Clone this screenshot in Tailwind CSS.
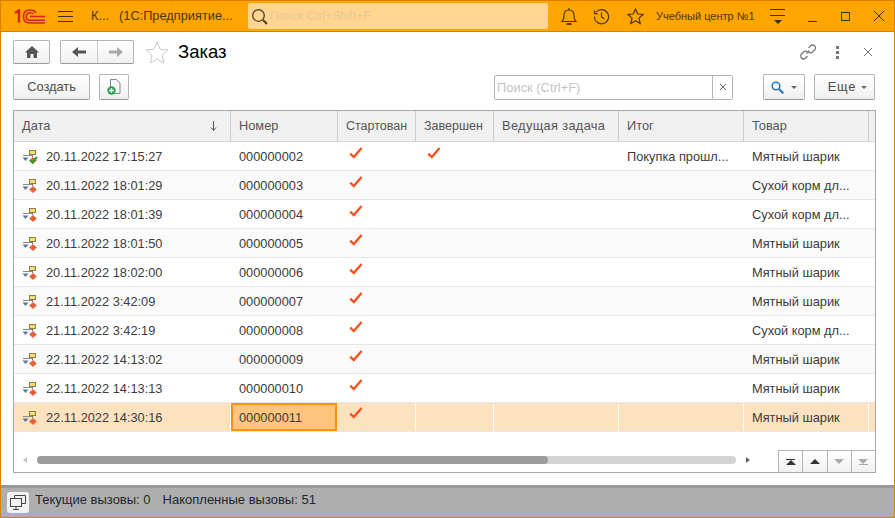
<!DOCTYPE html>
<html lang="en">

<head>
  <meta charset="UTF-8" />
  <script src="https://cdn.jsdelivr.net/npm/@tailwindcss/browser@4"></script>
  <title>Заказ</title>
</head>

<body class="font-['Liberation_Sans',Arial,sans-serif] bg-white">
  <svg class="hidden">
    <symbol id="flow" viewBox="0 0 16 14">
      <rect x="7.500" y="0.500" width="6" height="4" fill="#f3de7a" stroke="#8f8038" stroke-width="1" />
      <path d="M10.500 4.500v2.500" stroke="#777" stroke-width="1" fill="none" />
      <path d="M1 5.500h9" stroke="#8a8a8a" stroke-width="1" fill="none" />
      <path d="M0.500 7.500h6l-3 3.500z" fill="#55779a" />
      <path d="M11 7l3.800 3.500-3.800 3.500-3.800-3.500z" fill="#e2603a" />
    </symbol>
    <symbol id="check" viewBox="0 0 14 14">
      <path d="M1.200 7.600l3.600 3.400L12.600 2" fill="none" stroke="#f4511e" stroke-width="2.300" />
    </symbol>
  </svg>

  <div class="w-[895px] h-[518px] flex flex-col border border-[#d98200] overflow-hidden">
    <!-- top bar -->
    <div class="h-[31px] shrink-0 bg-[#ffa500] border-b border-[#d98200] flex items-center text-[#4a3510]">
      <svg class="ml-[13px] w-[31px] h-[15px]" viewBox="0 0 31 15" fill="none" stroke="#d6231f" stroke-width="1.600">
        <path d="M1 4l4-2.500v12" stroke-width="2.400" />
        <path d="M22 4c-1-2-3-3-6-3-4 0-6.500 2.500-6.500 6.500s2.500 6.500 6.500 6.500h15" />
        <path d="M19.500 5c-.8-.8-2-1.300-3.500-1.300-2.500 0-3.700 1.600-3.700 3.800s1.300 3.800 3.700 3.800h15" />
        <path d="M16 7.500h15" />
      </svg>
      <div class="ml-[13px] w-[15px] flex flex-col gap-[4px]">
        <div class="h-[1px] bg-[#3a3020]"></div>
        <div class="h-[1px] bg-[#3a3020]"></div>
        <div class="h-[1px] bg-[#3a3020]"></div>
      </div>
      <div class="ml-[18px] text-[12.800px] whitespace-nowrap w-[157px] flex">
        <span class="w-[28px]">К...</span>
        <span>(1С:Предприятие...</span>
      </div>
      <div class="w-[300px] h-[26px] bg-[#ffd590] rounded-[2px] flex items-center pl-[3px] text-[12px] text-[#e8c79a]">
        <svg class="w-[17px] h-[17px]" viewBox="0 0 17 17" fill="none" stroke="#4a3d28" stroke-width="1.300">
          <circle cx="7.500" cy="7.500" r="5.800" />
          <path d="M12 12l4 4" stroke-width="2" />
        </svg>
        <span class="ml-[2px]">Поиск Ctrl+Shift+F</span>
      </div>
      <svg class="ml-[12px] w-[18px] h-[19px]" viewBox="0 0 18 19" fill="none" stroke="#4a3510" stroke-width="1.200">
        <path d="M2 14.500c1.500-1.500 2-2.500 2-6 0-3.500 2-5.500 5-5.500s5 2 5 5.500c0 3.500.5 4.500 2 6z" />
        <path d="M9 1v2" />
        <path d="M6.500 17h5" stroke-width="1.800" />
      </svg>
      <svg class="ml-[15px] w-[17px] h-[17px]" viewBox="0 0 18 18" fill="none" stroke="#4a3510" stroke-width="1.200">
        <path d="M3.200 4.500A7.500 7.500 0 1 1 1.500 9" />
        <path d="M1.500 2.500v3.500h3.500" />
        <path d="M9 4.500v5l3 2" />
      </svg>
      <svg class="ml-[17px] w-[17px] h-[17px]" viewBox="0 0 17 17" fill="none" stroke="#4a3510" stroke-width="1.200">
        <path d="M8.500 1l2.200 5 5.300.5-4 3.600 1.200 5.400-4.700-2.800-4.700 2.800 1.200-5.400-4-3.600 5.300-.5z" />
      </svg>
      <div class="ml-[12px] text-[11px] whitespace-nowrap w-[114px]">Учебный центр №1</div>
      <div class="w-[15px] flex flex-col items-center">
        <div class="h-[1px] w-[15px] bg-[#3a3020]"></div>
        <div class="h-[1px] w-[15px] bg-[#3a3020] mt-[5px]"></div>
        <div class="mt-[4px] border-x-[4px] border-x-transparent border-t-[4px] border-t-[#3a3020]"></div>
      </div>
      <div class="ml-[23px] w-[9px] h-[1px] bg-[#3a3020] mt-[11px]"></div>
      <div class="ml-[24px] w-[9px] h-[9px] border border-[#3a3020]"></div>
      <svg class="ml-[24px] w-[10px] h-[10px]" viewBox="0 0 10 10" stroke="#3a3020" stroke-width="1">
        <path d="M0 0l10 10M10 0L0 10" />
      </svg>
    </div>

    <!-- form header -->
    <div class="h-[42px] shrink-0 flex items-center pl-[12px] pb-[2px]">
      <div class="w-[37px] h-[24px] rounded-[2px] border border-[#b4b4b4] border-b-[#999] bg-gradient-to-b from-white to-[#f0f0f0] flex items-center justify-center">
        <svg class="w-[14px] h-[12px]" viewBox="0 0 14 12" fill="#555">
          <path d="M7 0L0 6.500h2V12h3.500V8h3v4H12V6.500h2z" />
        </svg>
      </div>
      <div class="ml-[10px] w-[74px] h-[24px] rounded-[2px] border border-[#b4b4b4] border-b-[#999] bg-gradient-to-b from-white to-[#f0f0f0] flex">
        <div class="w-[37px] border-r border-[#ccc] flex items-center justify-center">
          <svg class="w-[14px] h-[10px]" viewBox="0 0 14 10" fill="#555"><path d="M0 5l6-5v3.500h8v3H6V10z" /></svg>
        </div>
        <div class="flex-1 flex items-center justify-center">
          <svg class="w-[14px] h-[10px]" viewBox="0 0 14 10" fill="#aaa"><path d="M14 5L8 0v3.500H0v3h8V10z" /></svg>
        </div>
      </div>
      <svg class="ml-[11px] w-[24px] h-[23px]" viewBox="0 0 24 23" fill="none" stroke="#c8c8c8" stroke-width="1">
        <path d="M12 1l3.200 7.300 7.800.7-5.900 5.200 1.800 7.800-6.900-4.100-6.900 4.100 1.800-7.800L1 9l7.800-.7z" />
      </svg>
      <div class="ml-[9px] text-[18.500px] text-black leading-none">Заказ</div>
      <svg class="ml-auto w-[16px] h-[16px]" viewBox="0 0 16 16" fill="none" stroke="#777" stroke-width="1.200">
        <path d="M6.500 9.500l3-3" />
        <path d="M8.500 4l2-2a2.800 2.800 0 0 1 4 4l-2 2a2.800 2.800 0 0 1-4 0" />
        <path d="M7.500 12l-2 2a2.800 2.800 0 0 1-4-4l2-2a2.800 2.800 0 0 1 4 0" />
      </svg>
      <div class="ml-[20px] flex flex-col gap-[2px]">
        <div class="w-[3px] h-[3px] bg-[#777]"></div>
        <div class="w-[3px] h-[3px] bg-[#777]"></div>
        <div class="w-[3px] h-[3px] bg-[#777]"></div>
      </div>
      <svg class="ml-[25px] mr-[22px] w-[8px] h-[8px]" viewBox="0 0 8 8" stroke="#777" stroke-width="1">
        <path d="M0 0l8 8M8 0L0 8" />
      </svg>
    </div>

    <!-- command bar -->
    <div class="h-[26px] shrink-0 flex items-center pl-[12px] text-[12.800px] text-[#4b4b4b]">
      <div class="w-[77px] h-[26px] rounded-[2px] border border-[#b4b4b4] border-b-[#999] bg-gradient-to-b from-white to-[#f0f0f0] flex items-center justify-center">Создать</div>
      <div class="ml-[9px] w-[30px] h-[26px] rounded-[2px] border border-[#b4b4b4] border-b-[#999] bg-gradient-to-b from-white to-[#f0f0f0] flex items-center justify-center">
        <svg class="w-[14px] h-[16px]" viewBox="0 0 14 16">
          <path d="M3.500 .5h6l3.500 3.500v10.500h-9.500z" fill="#f7f7f7" stroke="#7b8a99" stroke-width="1" />
          <circle cx="4.500" cy="11.500" r="4.200" fill="#2e9e4f" />
          <path d="M4.500 9v5M2 11.500h5" stroke="#fff" stroke-width="1.400" />
        </svg>
      </div>
      <div class="ml-[365px] w-[239px] h-[25px] border border-[#b4b4b4] rounded-[2px] flex text-[12.900px] text-[#c4c4c4]">
        <div class="flex-1 pl-[2px] leading-[23px]">Поиск (Ctrl+F)</div>
        <div class="w-[20px] border-l border-[#b4b4b4] flex items-center justify-center">
          <svg class="w-[6px] h-[6px]" viewBox="0 0 6 6" stroke="#666" stroke-width="1"><path d="M0 0l6 6M6 0L0 6" /></svg>
        </div>
      </div>
      <div class="ml-[30px] w-[42px] h-[26px] rounded-[2px] border border-[#b4b4b4] border-b-[#999] bg-gradient-to-b from-white to-[#f0f0f0] flex items-center justify-center gap-[7px]">
        <svg class="w-[13px] h-[13px]" viewBox="0 0 13 13" fill="none" stroke="#2b7bb9" stroke-width="1.600">
          <circle cx="5" cy="5" r="3.800" />
          <path d="M8 8l4.300 4.300" stroke-width="2.200" />
        </svg>
        <div class="border-x-[3px] border-x-transparent border-t-[3px] border-t-[#666]"></div>
      </div>
      <div class="ml-[9px] w-[61px] h-[26px] rounded-[2px] border border-[#b4b4b4] border-b-[#999] bg-gradient-to-b from-white to-[#f0f0f0] flex items-center justify-center gap-[5px] pl-[6px]">
        <span class="tracking-[0.8px]">Еще</span>
        <div class="border-x-[3px] border-x-transparent border-t-[3px] border-t-[#666]"></div>
      </div>
    </div>

    <!-- table -->
    <div class="ml-[12px] mt-[10px] w-[863px] h-[363px] shrink-0 border border-[#a8a8a8] flex flex-col text-[12.800px] text-[#3c3c3c]">
      <div class="h-[31px] shrink-0 grid grid-cols-[217px_107px_78px_78px_125px_125px_125px_6px] bg-[#f0f0f0] border-b border-[#d8d8d8] text-[#555] items-stretch">
        <div class="border-r border-[#ccc] pl-[8px] pr-[13px] flex items-center justify-between">
          <span>Дата</span>
          <svg class="w-[7px] h-[10px]" viewBox="0 0 7 10" fill="none" stroke="#555" stroke-width="1"><path d="M3.500 0v9M1 6.500l2.500 3 2.500-3" /></svg>
        </div>
        <div class="border-r border-[#ccc] pl-[8px] flex items-center">Номер</div>
        <div class="border-r border-[#ccc] pl-[8px] flex items-center text-[12.500px]">Стартован</div>
        <div class="border-r border-[#ccc] pl-[8px] flex items-center text-[12.500px]">Завершен</div>
        <div class="border-r border-[#ccc] pl-[8px] flex items-center tracking-[0.35px]">Ведущая задача</div>
        <div class="border-r border-[#ccc] pl-[8px] flex items-center">Итог</div>
        <div class="border-r border-[#ccc] pl-[8px] flex items-center">Товар</div>
        <div></div>
      </div>

      <div class="h-[29px] pt-[2px] grid grid-cols-[217px_107px_78px_78px_125px_125px_125px_6px] border-b border-[#e6e6e6] items-center bg-white">
        <div class="flex items-center pl-[8px]">
          <span class="relative w-[16px] h-[14px]"><svg class="w-[16px] h-[14px]"><use href="#flow" /></svg><svg class="absolute left-[7px] top-[6px] w-[9px] h-[8px]" viewBox="0 0 9 8" fill="none" stroke="#2ca02c" stroke-width="2.200"><path d="M1 4l2.500 2.500L8 1" /></svg></span>
          <span class="ml-[8px]">20.11.2022 17:15:27</span>
        </div>
        <div class="pl-[8px]">000000002</div>
        <div class="pl-[11px] pb-[8px]"><svg class="w-[14px] h-[14px]"><use href="#check" /></svg></div>
        <div class="pl-[11px] pb-[8px]"><svg class="w-[14px] h-[14px]"><use href="#check" /></svg></div>
        <div></div>
        <div class="pl-[8px] whitespace-nowrap">Покупка прошл...</div>
        <div class="pl-[8px] whitespace-nowrap">Мятный шарик</div>
        <div></div>
      </div>
      <div class="h-[29px] pt-[2px] grid grid-cols-[217px_107px_78px_78px_125px_125px_125px_6px] border-b border-[#e6e6e6] items-center bg-[#fafafa]">
        <div class="flex items-center pl-[8px]"><svg class="w-[16px] h-[14px]"><use href="#flow" /></svg><span class="ml-[8px]">20.11.2022 18:01:29</span></div>
        <div class="pl-[8px]">000000003</div>
        <div class="pl-[11px] pb-[8px]"><svg class="w-[14px] h-[14px]"><use href="#check" /></svg></div>
        <div></div><div></div><div></div>
        <div class="pl-[8px] whitespace-nowrap">Сухой корм дл...</div>
        <div></div>
      </div>
      <div class="h-[29px] pt-[2px] grid grid-cols-[217px_107px_78px_78px_125px_125px_125px_6px] border-b border-[#e6e6e6] items-center bg-white">
        <div class="flex items-center pl-[8px]"><svg class="w-[16px] h-[14px]"><use href="#flow" /></svg><span class="ml-[8px]">20.11.2022 18:01:39</span></div>
        <div class="pl-[8px]">000000004</div>
        <div class="pl-[11px] pb-[8px]"><svg class="w-[14px] h-[14px]"><use href="#check" /></svg></div>
        <div></div><div></div><div></div>
        <div class="pl-[8px] whitespace-nowrap">Сухой корм дл...</div>
        <div></div>
      </div>
      <div class="h-[29px] pt-[2px] grid grid-cols-[217px_107px_78px_78px_125px_125px_125px_6px] border-b border-[#e6e6e6] items-center bg-[#fafafa]">
        <div class="flex items-center pl-[8px]"><svg class="w-[16px] h-[14px]"><use href="#flow" /></svg><span class="ml-[8px]">20.11.2022 18:01:50</span></div>
        <div class="pl-[8px]">000000005</div>
        <div class="pl-[11px] pb-[8px]"><svg class="w-[14px] h-[14px]"><use href="#check" /></svg></div>
        <div></div><div></div><div></div>
        <div class="pl-[8px] whitespace-nowrap">Мятный шарик</div>
        <div></div>
      </div>
      <div class="h-[29px] pt-[2px] grid grid-cols-[217px_107px_78px_78px_125px_125px_125px_6px] border-b border-[#e6e6e6] items-center bg-white">
        <div class="flex items-center pl-[8px]"><svg class="w-[16px] h-[14px]"><use href="#flow" /></svg><span class="ml-[8px]">20.11.2022 18:02:00</span></div>
        <div class="pl-[8px]">000000006</div>
        <div class="pl-[11px] pb-[8px]"><svg class="w-[14px] h-[14px]"><use href="#check" /></svg></div>
        <div></div><div></div><div></div>
        <div class="pl-[8px] whitespace-nowrap">Мятный шарик</div>
        <div></div>
      </div>
      <div class="h-[29px] pt-[2px] grid grid-cols-[217px_107px_78px_78px_125px_125px_125px_6px] border-b border-[#e6e6e6] items-center bg-[#fafafa]">
        <div class="flex items-center pl-[8px]"><svg class="w-[16px] h-[14px]"><use href="#flow" /></svg><span class="ml-[8px]">21.11.2022 3:42:09</span></div>
        <div class="pl-[8px]">000000007</div>
        <div class="pl-[11px] pb-[8px]"><svg class="w-[14px] h-[14px]"><use href="#check" /></svg></div>
        <div></div><div></div><div></div>
        <div class="pl-[8px] whitespace-nowrap">Мятный шарик</div>
        <div></div>
      </div>
      <div class="h-[29px] pt-[2px] grid grid-cols-[217px_107px_78px_78px_125px_125px_125px_6px] border-b border-[#e6e6e6] items-center bg-white">
        <div class="flex items-center pl-[8px]"><svg class="w-[16px] h-[14px]"><use href="#flow" /></svg><span class="ml-[8px]">21.11.2022 3:42:19</span></div>
        <div class="pl-[8px]">000000008</div>
        <div class="pl-[11px] pb-[8px]"><svg class="w-[14px] h-[14px]"><use href="#check" /></svg></div>
        <div></div><div></div><div></div>
        <div class="pl-[8px] whitespace-nowrap">Сухой корм дл...</div>
        <div></div>
      </div>
      <div class="h-[29px] pt-[2px] grid grid-cols-[217px_107px_78px_78px_125px_125px_125px_6px] border-b border-[#e6e6e6] items-center bg-[#fafafa]">
        <div class="flex items-center pl-[8px]"><svg class="w-[16px] h-[14px]"><use href="#flow" /></svg><span class="ml-[8px]">22.11.2022 14:13:02</span></div>
        <div class="pl-[8px]">000000009</div>
        <div class="pl-[11px] pb-[8px]"><svg class="w-[14px] h-[14px]"><use href="#check" /></svg></div>
        <div></div><div></div><div></div>
        <div class="pl-[8px] whitespace-nowrap">Мятный шарик</div>
        <div></div>
      </div>
      <div class="h-[29px] pt-[2px] grid grid-cols-[217px_107px_78px_78px_125px_125px_125px_6px] border-b border-[#e6e6e6] items-center bg-white">
        <div class="flex items-center pl-[8px]"><svg class="w-[16px] h-[14px]"><use href="#flow" /></svg><span class="ml-[8px]">22.11.2022 14:13:13</span></div>
        <div class="pl-[8px]">000000010</div>
        <div class="pl-[11px] pb-[8px]"><svg class="w-[14px] h-[14px]"><use href="#check" /></svg></div>
        <div></div><div></div><div></div>
        <div class="pl-[8px] whitespace-nowrap">Мятный шарик</div>
        <div></div>
      </div>
      <div class="h-[29px] grid grid-cols-[217px_107px_78px_78px_125px_125px_125px_6px] border-b border-[#e6e6e6] bg-[#fde2c0]">
        <div class="flex items-center pl-[8px] pt-[2px] border-r border-white"><svg class="w-[16px] h-[14px]"><use href="#flow" /></svg><span class="ml-[8px]">22.11.2022 14:30:16</span></div>
        <div class="pl-[6px] pt-[2px] flex items-center bg-[#ffc47d] border-2 border-[#ff9000] mr-[1px]">000000011</div>
        <div class="pl-[11px] pt-[3px] border-r border-white"><svg class="w-[14px] h-[14px]"><use href="#check" /></svg></div>
        <div class="border-r border-white"></div>
        <div class="border-r border-white"></div>
        <div class="border-r border-white"></div>
        <div class="pl-[8px] pt-[2px] flex items-center border-r border-white whitespace-nowrap">Мятный шарик</div>
        <div></div>
      </div>

      <!-- scrollbar and row navigation -->
      <div class="flex-1 flex items-end">
        <div class="flex-1 h-[22px] flex items-center pl-[9px] pb-[2px]">
          <div class="border-y-[3px] border-y-transparent border-r-[4px] border-r-[#c4c4c4]"></div>
          <div class="ml-[10px] w-[699px] h-[8px] rounded-full bg-[#d4d4d4]">
            <div class="w-[511px] h-[8px] rounded-full bg-[#9c9c9c]"></div>
          </div>
          <div class="ml-[10px] border-y-[3px] border-y-transparent border-l-[4px] border-l-[#666]"></div>
        </div>
        <div class="w-[97px] h-[22px] flex border-t border-l border-[#b4b4b4] bg-gradient-to-b from-white to-[#f0f0f0]">
          <div class="flex-1 border-r border-[#b4b4b4] flex flex-col items-center justify-center">
            <div class="w-[9px] h-[1px] bg-[#333]"></div>
            <div class="border-x-[5px] border-x-transparent border-b-[5px] border-b-[#333]"></div>
          </div>
          <div class="flex-1 border-r border-[#b4b4b4] flex items-center justify-center">
            <div class="border-x-[5px] border-x-transparent border-b-[5px] border-b-[#333]"></div>
          </div>
          <div class="flex-1 border-r border-[#b4b4b4] flex items-center justify-center">
            <div class="border-x-[5px] border-x-transparent border-t-[5px] border-t-[#aaa]"></div>
          </div>
          <div class="flex-1 flex flex-col items-center justify-center">
            <div class="border-x-[5px] border-x-transparent border-t-[5px] border-t-[#aaa]"></div>
            <div class="w-[9px] h-[1px] bg-[#aaa]"></div>
          </div>
        </div>
      </div>
    </div>

    <!-- status bar -->
    <div class="mt-[12px] flex-1 bg-[#aeaeae] border-t-[3px] border-[#999] flex items-center pl-[6px] text-[13px] text-[#26262e]">
      <div class="w-[22px] h-[21px] bg-[#f2f2f2] rounded-[3px] flex items-center justify-center">
        <svg class="w-[16px] h-[15px]" viewBox="0 0 16 15" fill="none" stroke="#444" stroke-width="1">
          <path d="M4.500 3V.5h11v8H12" />
          <rect x="0.500" y="3.500" width="11" height="8" />
          <path d="M6 11.500v2.500M3 14.500h6" />
        </svg>
      </div>
      <span class="ml-[6px] pb-[6px]">Текущие вызовы: 0</span>
      <span class="ml-[12px] pb-[6px]">Накопленные вызовы: 51</span>
    </div>
  </div>
</body>

</html>
